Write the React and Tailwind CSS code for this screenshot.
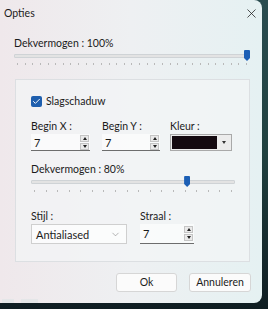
import { X, Check, ChevronDown } from "lucide-react";

const font = { fontFamily: 'Lato, "Noto Sans", sans-serif' };

const Ticks = ({ count, gap }) => (
  <div className={`flex justify-between px-[3px] ${gap}`}>
    {Array.from({ length: count }).map((_, i) => (
      <span key={i} className="w-px h-[2px] bg-[#b9b9b9]" />
    ))}
  </div>
);

const Slider = ({ pct, ticks, gap }) => (
  <div>
    <div className="relative h-[11px] flex items-center">
      <div className="w-full h-[4px] bg-[#e3e3e3] border border-[#cfd3d6] rounded-[1px]" />
      <div
        className="absolute top-0 w-[6px] h-[11px] bg-[#1c5fb5] rounded-t-[1px] [clip-path:polygon(0_0,100%_0,100%_72%,50%_100%,0_72%)]"
        style={{ left: `calc(${pct}% - 6px)` }}
      />
    </div>
    <Ticks count={ticks} gap={gap} />
  </div>
);

const Spinner = () => (
  <div className="flex flex-col gap-px w-[9px]">
    <div className="h-[7px] bg-[#eaeaea] border border-[#c5c5c5] flex items-center justify-center">
      <span className="w-0 h-0 border-x-[2px] border-x-transparent border-b-[3px] border-b-[#222]" />
    </div>
    <div className="h-[7px] bg-[#eaeaea] border border-[#c5c5c5] flex items-center justify-center">
      <span className="w-0 h-0 border-x-[2px] border-x-transparent border-t-[3px] border-t-[#222]" />
    </div>
  </div>
);

const NumberBox = ({ value, width }) => (
  <div className={`flex items-center justify-between border-b border-[#6d6d6d] bg-white/60 pl-[3px] pr-[1px] ${width}`}>
    <span className="text-[11px] leading-none">{value}</span>
    <Spinner />
  </div>
);

export default function App() {
  return (
    <div className="w-[268px] h-[309px] bg-gradient-to-b from-[#2a4d50] via-[#20413f] to-[#0f1d22] overflow-hidden" style={font}>
      <div className="w-[262px] h-[303px] rounded-r-[8px] bg-gradient-to-r from-[#efe8eb] via-[#eef0f2] to-[#e5f1f2] text-[#1b1b1b] flex flex-col text-[10.5px]">
        <div className="h-[26px] flex items-center justify-between pl-[4px] pr-[3px]">
          <span className="leading-[14px]">Opties</span>
          <X size={15} strokeWidth={1.2} />
        </div>

        <div className="pl-[14px] pr-[12px] pt-[11px]">
          <div className="leading-[13px]">Dekvermogen : 100%</div>
          <Slider pct={100} ticks={31} gap="mt-[2px]" />
        </div>

        <div className="ml-[15px] mr-[12px] mt-[14px] h-[183px] border border-[#dcdfe2] bg-[#f4f5f6]/70 px-[15px] pt-[14px]">
          <label className="flex items-center gap-[4px] h-[14px] leading-[14px]">
            <span className="w-[11px] h-[11px] rounded-[2px] bg-[#1f5fae] flex items-center justify-center">
              <Check size={9} strokeWidth={2.5} className="text-white" />
            </span>
            Slagschaduw
          </label>

          <div className="flex mt-[11px]">
            <div className="w-[71px]">
              <div className="leading-[14px]">Begin X :</div>
              <NumberBox value="7" width="w-[59px] h-[17px] mt-[1px]" />
            </div>
            <div className="w-[68px]">
              <div className="leading-[14px]">Begin Y :</div>
              <NumberBox value="7" width="w-[58px] h-[17px] mt-[1px]" />
            </div>
            <div>
              <div className="leading-[14px]">Kleur :</div>
              <div className="mt-[1px] w-[62px] h-[17px] border border-[#a9a9a9] bg-[#ececec] flex items-center p-[1px] gap-px">
                <div className="flex-1 h-full bg-[#140a10]" />
                <div className="w-[12px] h-full flex items-center justify-center">
                  <span className="w-0 h-0 border-x-[2px] border-x-transparent border-t-[3px] border-t-[#333]" />
                </div>
              </div>
            </div>
          </div>

          <div className="mt-[11px] leading-[14px]">Dekvermogen : 80%</div>
          <div className="w-[204px]">
            <Slider pct={78} ticks={18} gap="mt-[3px]" />
          </div>

          <div className="flex mt-[17px]">
            <div className="w-[109px]">
              <div className="leading-[14px]">Stijl :</div>
              <div className="mt-[1px] w-[96px] h-[20px] border border-[#cfcfcf] bg-white/70 flex items-center justify-between pl-[4px] pr-[5px]">
                <span className="leading-none text-[11px]">Antialiased</span>
                <ChevronDown size={11} strokeWidth={1.2} className="text-[#777]" />
              </div>
            </div>
            <div>
              <div className="leading-[14px]">Straal :</div>
              <NumberBox value="7" width="w-[54px] h-[20px] mt-[1px]" />
            </div>
          </div>
        </div>

        <div className="flex justify-end gap-[12px] pr-[11px] mt-[11px]">
          <button className="w-[61px] h-[19px] rounded-[3px] border border-[#d6d6d6] bg-[#fbfbfb] leading-none">Ok</button>
          <button className="w-[62px] h-[19px] rounded-[3px] border border-[#d6d6d6] bg-[#fbfbfb] leading-none">Annuleren</button>
        </div>

        <div className="mt-auto flex gap-[7px] pl-[2px]">
          <span className="w-[12px] h-[4px] bg-[#e4e6e8]" />
          <span className="w-[17px] h-[4px] bg-[#e4e6e8]" />
        </div>
      </div>
    </div>
  );
}
